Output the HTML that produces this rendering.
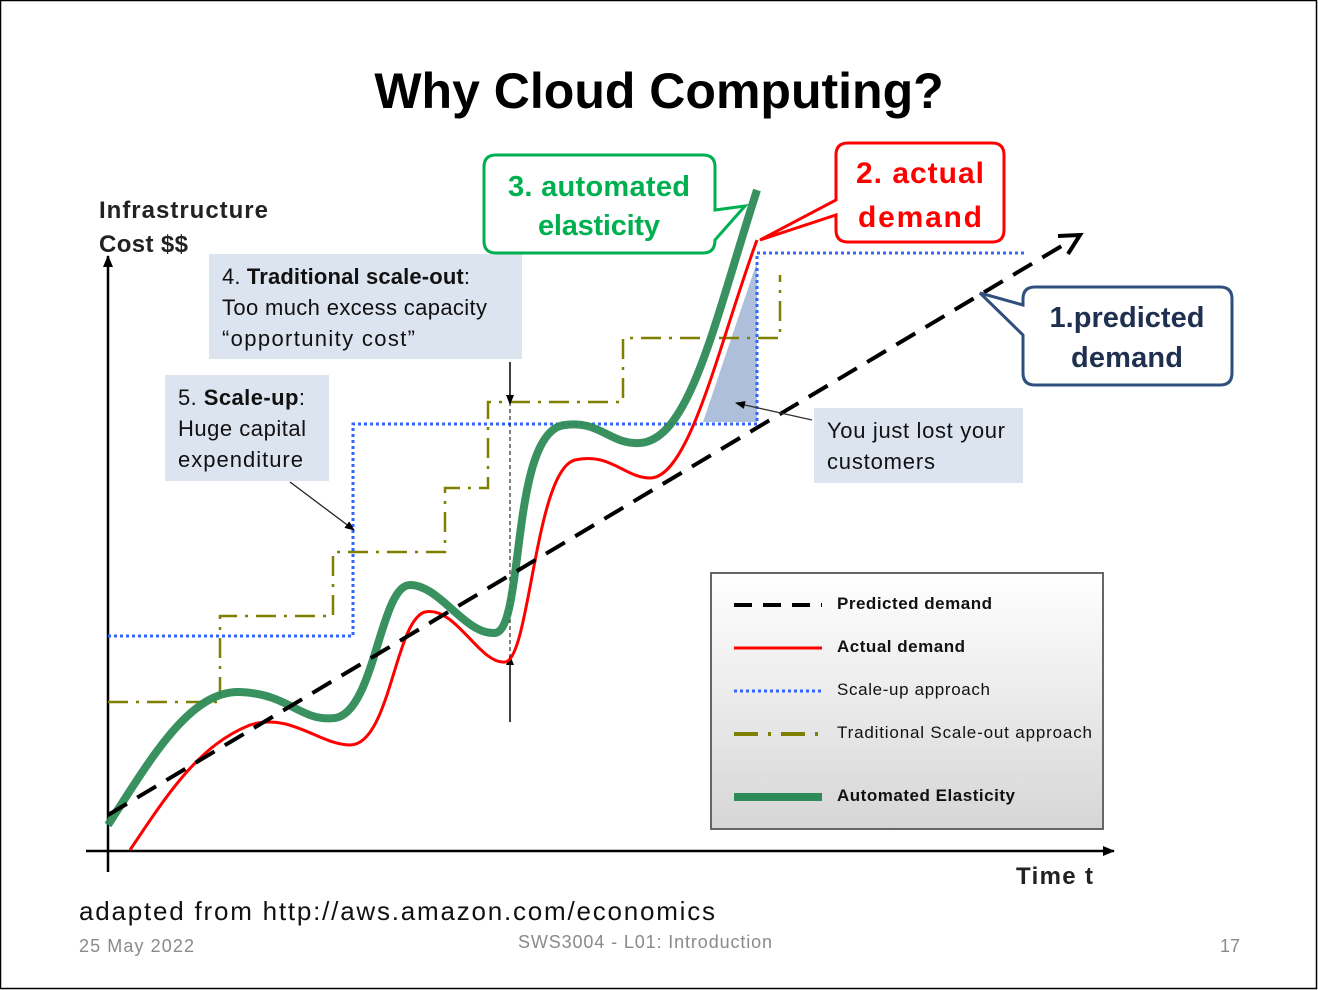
<!DOCTYPE html>
<html><head><meta charset="utf-8"><style>
body{margin:0;background:#fff;}
svg{display:block;font-family:"Liberation Sans",sans-serif;}
</style></head><body>
<svg width="1318" height="990" viewBox="0 0 1318 990" xmlns="http://www.w3.org/2000/svg">
<defs>
<linearGradient id="lg" x1="0" y1="0" x2="0" y2="1"><stop offset="0" stop-color="#fff"/><stop offset="1" stop-color="#d6d6d6"/></linearGradient>
<marker id="ah" markerUnits="userSpaceOnUse" markerWidth="12" markerHeight="10" refX="11" refY="5" orient="auto"><path d="M0,0 L12,5 L0,10 z" fill="#000"/></marker>
<marker id="as" markerUnits="userSpaceOnUse" markerWidth="10" markerHeight="8" refX="9" refY="4" orient="auto"><path d="M0,0 L10,4 L0,8 z" fill="#000"/></marker>
</defs>
<rect x="0.5" y="0.5" width="1316" height="988" fill="#fff" stroke="#000" stroke-width="1.5"/>
<text x="659" y="108" font-size="50" font-weight="bold" text-anchor="middle">Why Cloud Computing?</text>

<text x="99" y="218" font-size="24" font-weight="bold" fill="#222" textLength="169">Infrastructure</text>
<text x="99" y="252" font-size="24" font-weight="bold" fill="#222" textLength="89">Cost $$</text>

<!-- axes -->
<line x1="108" y1="872" x2="108" y2="256" stroke="#000" stroke-width="2.5" marker-end="url(#ah)"/>
<line x1="86" y1="851" x2="1114" y2="851" stroke="#000" stroke-width="2.5" marker-end="url(#ah)"/>
<text x="1016" y="884" font-size="24" font-weight="bold" fill="#222" textLength="77">Time t</text>

<polygon points="703,422 757,422 757,262" fill="#aebfdc"/>

<polyline points="108,702 220,702 220,616 333,616 333,552 445,552 445,488 488,488 488,402 623,402 623,338 780,338 780,275" fill="none" stroke="#808000" stroke-width="2.5" stroke-dasharray="20,8,3,8"/>
<polyline points="108,636 353,636 353,424 757,424 757,253 1025,253" fill="none" stroke="#3366ff" stroke-width="3" stroke-dasharray="3,3"/>

<line x1="510" y1="362" x2="510" y2="404" stroke="#000" stroke-width="1.5" marker-end="url(#as)"/>
<line x1="510" y1="402" x2="510" y2="660" stroke="#000" stroke-width="1" stroke-dasharray="4,3"/>
<line x1="510" y1="722" x2="510" y2="656" stroke="#000" stroke-width="1.5" marker-end="url(#as)"/>

<path d="M130,850 C170,790 200,745 250,725 C290,712 320,745 350,745 C390,745 395,620 425,612 C455,605 480,665 505,662 C530,660 535,470 575,460 C610,452 625,478 650,478 C690,478 720,340 757,240" fill="none" stroke="#ff0000" stroke-width="3"/>
<path d="M108,825 C150,760 190,690 240,692 C290,694 300,722 335,718 C375,712 380,585 410,585 C440,585 465,635 495,633 C525,630 510,430 565,425 C600,420 610,445 640,443 C690,440 715,320 757,190" fill="none" stroke="#2e8b57" stroke-width="8" opacity="0.95"/>
<line x1="108" y1="815" x2="1070" y2="241" stroke="#000" stroke-width="4" stroke-dasharray="22,12"/>
<path d="M1058,236 L1080,235 L1068,254" fill="none" stroke="#000" stroke-width="4"/>

<rect x="209" y="254" width="313" height="105" fill="#dce4f0"/>
<text x="222" y="284" font-size="22" fill="#111" textLength="248">4. <tspan font-weight="bold">Traditional scale-out</tspan>:</text>
<text x="222" y="315" font-size="22" fill="#111" textLength="265">Too much excess capacity</text>
<text x="222" y="346" font-size="22" fill="#111" textLength="193">“opportunity cost”</text>
<rect x="165" y="375" width="164" height="106" fill="#dce4f0"/>
<text x="178" y="405" font-size="22" fill="#111" textLength="127">5.  <tspan font-weight="bold">Scale-up</tspan>:</text>
<text x="178" y="436" font-size="22" fill="#111" textLength="128">Huge capital</text>
<text x="178" y="467" font-size="22" fill="#111" textLength="125">expenditure</text>
<line x1="290" y1="482" x2="354" y2="530" stroke="#222" stroke-width="1.3" marker-end="url(#as)"/>

<rect x="814" y="408" width="209" height="75" fill="#dce4f0"/>
<text x="827" y="438" font-size="22" fill="#111" textLength="178">You just lost your</text>
<text x="827" y="469" font-size="22" fill="#111" textLength="108">customers</text>
<line x1="812" y1="420" x2="736" y2="403" stroke="#333" stroke-width="1.3" marker-end="url(#as)"/>

<path d="M496,155 L703,155 Q715,155 715,167 L715,210 L745,206 L715,240 Q715,253 703,253 L496,253 Q484,253 484,241 L484,167 Q484,155 496,155 Z" fill="#fff" stroke="#00b050" stroke-width="3"/>
<text x="599" y="196" font-size="29" font-weight="bold" fill="#00b050" text-anchor="middle" textLength="182">3. automated</text>
<text x="599" y="235" font-size="29" font-weight="bold" fill="#00b050" text-anchor="middle" textLength="122">elasticity</text>
<path d="M848,143 L992,143 Q1004,143 1004,155 L1004,230 Q1004,242 992,242 L848,242 Q836,242 836,230 L836,215 L760,240 L836,200 L836,155 Q836,143 848,143 Z" fill="#fff" stroke="#ff0000" stroke-width="3"/>
<text x="920" y="183" font-size="30" font-weight="bold" fill="#ff0000" text-anchor="middle" textLength="128">2. actual</text>
<text x="920" y="227" font-size="30" font-weight="bold" fill="#ff0000" text-anchor="middle" textLength="124">demand</text>
<path d="M1035,287 L1220,287 Q1232,287 1232,299 L1232,373 Q1232,385 1220,385 L1035,385 Q1023,385 1023,373 L1023,335 L980,293 L1023,305 L1023,299 Q1023,287 1035,287 Z" fill="#fff" stroke="#2f4f7f" stroke-width="3"/>
<text x="1127" y="327" font-size="29" font-weight="bold" fill="#1f2f4f" text-anchor="middle" textLength="155">1.predicted</text>
<text x="1127" y="367" font-size="29" font-weight="bold" fill="#1f2f4f" text-anchor="middle" textLength="112">demand</text>

<rect x="711" y="573" width="392" height="256" fill="url(#lg)" stroke="#666" stroke-width="2"/>
<line x1="734" y1="605" x2="822" y2="605" stroke="#000" stroke-width="4" stroke-dasharray="18,11"/>
<text x="837" y="609" font-size="17" font-weight="bold" fill="#111" textLength="155">Predicted demand</text>
<line x1="734" y1="648" x2="822" y2="648" stroke="#ff0000" stroke-width="3"/>
<text x="837" y="652" font-size="17" font-weight="bold" fill="#111" textLength="128">Actual demand</text>
<line x1="734" y1="691" x2="822" y2="691" stroke="#3366ff" stroke-width="3" stroke-dasharray="3,3"/>
<text x="837" y="695" font-size="17" fill="#111" textLength="153">Scale-up approach</text>
<line x1="734" y1="734" x2="822" y2="734" stroke="#808000" stroke-width="4" stroke-dasharray="24,10,3,10"/>
<text x="837" y="738" font-size="17" fill="#111" textLength="255">Traditional Scale-out approach</text>
<line x1="734" y1="797" x2="822" y2="797" stroke="#2e8b57" stroke-width="8"/>
<text x="837" y="801" font-size="17" font-weight="bold" fill="#111" textLength="178">Automated Elasticity</text>

<text x="79" y="920" font-size="26" fill="#111" textLength="636">adapted from  http://aws.amazon.com/economics</text>
<text x="79" y="952" font-size="18" fill="#8a8a8a" textLength="115">25 May 2022</text>
<text x="518" y="948" font-size="18" fill="#8a8a8a" textLength="254">SWS3004 - L01: Introduction</text>
<text x="1240" y="952" font-size="18" fill="#8a8a8a" text-anchor="end">17</text>
</svg>
</body></html>
